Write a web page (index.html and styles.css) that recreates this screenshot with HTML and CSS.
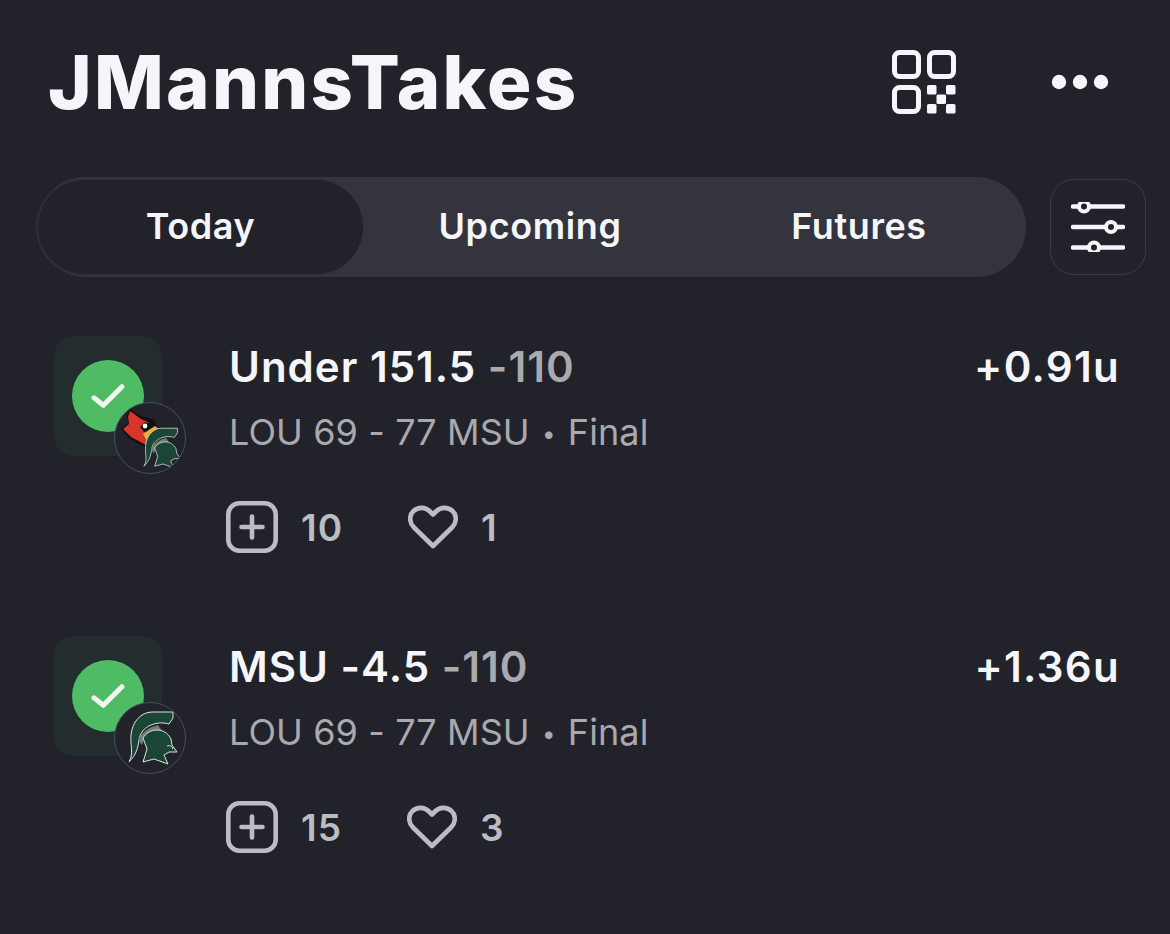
FILE: index.html
```html
<!DOCTYPE html>
<html lang="en">
<head>
<meta charset="utf-8">
<title>JMannsTakes</title>
<link rel="stylesheet" href="styles.css">
</head>
<body>
<main class="screen">
  <header class="header">
    <h1 class="title">JMannsTakes</h1>
    <div class="header-actions">
      <svg class="qr" viewBox="0 0 64 64" fill="none" stroke="#f5f6fa" stroke-width="5">
        <rect x="2.500" y="2.500" width="24" height="24" rx="5"/>
        <rect x="37.500" y="2.500" width="24" height="24" rx="5"/>
        <rect x="2.500" y="37.500" width="24" height="24" rx="5"/>
        <g fill="#f5f6fa" stroke="none">
          <rect x="35" y="35" width="9.500" height="9.500" rx="1.500"/>
          <rect x="54" y="35" width="9.500" height="9.500" rx="1.500"/>
          <rect x="44.500" y="44.500" width="9.500" height="9.500" rx="1.500"/>
          <rect x="35" y="54" width="9.500" height="9.500" rx="1.500"/>
          <rect x="54" y="54" width="9.500" height="9.500" rx="1.500"/>
        </g>
      </svg>
      <svg class="dots" viewBox="0 0 58 16" fill="#f5f6fa">
        <circle cx="8" cy="8" r="7.200"/>
        <circle cx="29" cy="8" r="7.200"/>
        <circle cx="50" cy="8" r="7.200"/>
      </svg>
    </div>
  </header>

  <nav class="tabs-row">
    <div class="tabs">
      <div class="tab tab-active">Today</div>
      <div class="tab tab-upcoming">Upcoming</div>
      <div class="tab tab-futures">Futures</div>
    </div>
    <div class="filter">
      <svg class="filter-icon" viewBox="0 0 54 50" fill="none" stroke="#f5f6fa" stroke-width="4.400" stroke-linecap="round">
        <path d="M2 4.500h50M2 25h50M2 45.500h50"/>
        <g fill="#21222a" stroke-width="4">
          <circle cx="13" cy="4.500" r="5"/>
          <circle cx="40" cy="25" r="5"/>
          <circle cx="23" cy="45.500" r="5"/>
        </g>
      </svg>
    </div>
  </nav>

  <section class="pick">
    <div class="status">
      <div class="status-tile">
        <div class="check">
          <svg class="check-icon" viewBox="0 0 36 28" fill="none" stroke="#f1f6f1" stroke-width="5.400" stroke-linecap="round" stroke-linejoin="round"><path d="M3 16l10 8L33 4"/></svg>
        </div>
      </div>
      <div class="badge">
        <svg class="logo" viewBox="0 0 70 70">
          <path d="M15 5l-3 8 1 7-7 6 9 10 18 10 10-20-3-8-6-3-5-1-7-3z" fill="#111"/>
          <path d="M15 8l-2 6 1 7-6 5 8 8 15 8 5-15-3-8-7-3z" fill="#d9352a"/>
          <path d="M25 24l5-5 7 3-3 6-5 1z" fill="#111"/>
          <circle cx="30" cy="23" r="2.400" fill="#fff"/>
          <path d="M28 31l12-8 5 4-1 7-8 6-4-2z" fill="#e8b23a"/>
          <g transform="translate(18.400 18.400) scale(.76)">
            <path d="M14 59C19 50 15 42 16 32 17 19 26 9 37 9H58V15L54 21C47 19 41 20 36 22 29 25 25 30 24 37 23 45 21 52 14 59Z" fill="#1b4636" stroke="#d9e3de"/>
            <path d="M23 37C27 29 34 24 43 22L47 28C40 28 33 31 29 36L27 42Z" fill="#6f7f78"/>
            <path d="M28 35C31 30 36 27 42 27 48 27 53 30 56 36L57 42 62 49H54L49 52 53 61 39 56 28 59 32 46Z" fill="#1b4636" stroke="#d9e3de"/>
          </g>
        </svg>
      </div>
    </div>
    <div class="pick-body">
      <div class="pick-top">
        <div class="pick-name">Under 151.5 <span class="odds">-110</span></div>
        <div class="units">+0.91u</div>
      </div>
      <div class="score">LOU 69 - 77 MSU <span class="sep">•</span> Final</div>
      <div class="actions">
        <div class="action action-add">
          <svg class="add-icon" viewBox="0 0 52 52" fill="none" stroke="#bcbcc2" stroke-width="4.600" stroke-linecap="round"><rect x="2.300" y="2.300" width="47.400" height="47.400" rx="11"/><path d="M26 15.500v21M15.500 26h21"/></svg>
          <span class="count">10</span>
        </div>
        <div class="action">
          <svg class="heart-icon" viewBox="0 0 50 44" fill="none" stroke="#bcbcc2" stroke-width="4.600" stroke-linejoin="round"><path d="M25 41L6 22.500C1 17.500 1 10 5.500 6c5-4.500 12-4 16.500 .5l3 3 3-3c4.500-4.500 11.500-5 16.500-.5 4.500 4 4.500 11.500 -.5 16.500z"/></svg>
          <span class="count">1</span>
        </div>
      </div>
    </div>
  </section>

  <section class="pick">
    <div class="status">
      <div class="status-tile">
        <div class="check">
          <svg class="check-icon" viewBox="0 0 36 28" fill="none" stroke="#f1f6f1" stroke-width="5.400" stroke-linecap="round" stroke-linejoin="round"><path d="M3 16l10 8L33 4"/></svg>
        </div>
      </div>
      <div class="badge">
        <svg class="logo" viewBox="0 0 70 70">
          <path d="M14 59C19 50 15 42 16 32 17 19 26 9 37 9H58V15L54 21C47 19 41 20 36 22 29 25 25 30 24 37 23 45 21 52 14 59Z" fill="#1b4636" stroke="#d9e3de"/>
          <path d="M23 37C27 29 34 24 43 22L47 28C40 28 33 31 29 36L27 42Z" fill="#6f7f78"/>
          <path d="M28 35C31 30 36 27 42 27 48 27 53 30 56 36L57 42 62 49H54L49 52 53 61 39 56 28 59 32 46Z" fill="#1b4636" stroke="#d9e3de"/>
          <path d="M52 43c3-1 5 0 6 3" fill="none" stroke="#d9e3de"/>
        </svg>
      </div>
    </div>
    <div class="pick-body">
      <div class="pick-top">
        <div class="pick-name">MSU -4.5 <span class="odds">-110</span></div>
        <div class="units">+1.36u</div>
      </div>
      <div class="score">LOU 69 - 77 MSU <span class="sep">•</span> Final</div>
      <div class="actions">
        <div class="action action-add">
          <svg class="add-icon" viewBox="0 0 52 52" fill="none" stroke="#bcbcc2" stroke-width="4.600" stroke-linecap="round"><rect x="2.300" y="2.300" width="47.400" height="47.400" rx="11"/><path d="M26 15.500v21M15.500 26h21"/></svg>
          <span class="count">15</span>
        </div>
        <div class="action">
          <svg class="heart-icon" viewBox="0 0 50 44" fill="none" stroke="#bcbcc2" stroke-width="4.600" stroke-linejoin="round"><path d="M25 41L6 22.500C1 17.500 1 10 5.500 6c5-4.500 12-4 16.500 .5l3 3 3-3c4.500-4.500 11.500-5 16.500-.5 4.500 4 4.500 11.500 -.5 16.500z"/></svg>
          <span class="count">3</span>
        </div>
      </div>
    </div>
  </section>
</main>
</body>
</html>
```
FILE: styles.css
```css
* { box-sizing: border-box; }
html, body { margin: 0; height: 100%; background: #21222a; }
body { font-family: Inter, "Liberation Sans", sans-serif; color: #f5f6fa; overflow: hidden; }
.screen { width: 1170px; height: 934px; padding-top: 40px; }

.header { display: flex; align-items: center; justify-content: space-between; height: 84px; padding: 0 61px 0 48px; }
.title { margin: 0; font-size: 74px; font-weight: 800; line-height: 84px; letter-spacing: 2.300px; color: #f5f6fa; }
.header-actions { display: flex; align-items: center; gap: 95px; }
.qr { width: 64px; height: 64px; display: block; }
.dots { width: 58px; height: 16px; display: block; }

.tabs-row { display: flex; align-items: center; gap: 24px; margin-top: 53px; padding-left: 36px; }
.tabs { display: flex; align-items: center; width: 990px; height: 100px; border-radius: 50px; background: #33343d; padding: 3px 2px; }
.tab { font-size: 36px; font-weight: 600; line-height: 92px; height: 94px; letter-spacing: .6px; text-align: center; color: #f5f6fa; }
.tab-active { width: 325px; border-radius: 47px; background: #21222a; box-shadow: -1px 0 0 1px #2d2e37; }
.tab-upcoming { width: 334px; }
.tab-futures { width: 324px; }
.filter { display: flex; align-items: center; justify-content: center; width: 96px; height: 96px; border: 1px solid #3a3b44; border-radius: 24px; }
.filter-icon { width: 54px; height: 50px; display: block; }

.pick { display: flex; height: 300px; padding-left: 54px; }
.tabs-row + .pick { margin-top: 59px; }
.status { position: relative; width: 175px; flex: none; height: 138px; }
.status-tile { display: flex; align-items: center; justify-content: center; width: 108px; height: 120px; border-radius: 20px; background: #242d2d; }
.check { display: flex; align-items: center; justify-content: center; width: 72px; height: 72px; border-radius: 50%; background: #4fbc65; }
.check-icon { width: 34px; height: 26px; display: block; }
.badge { position: absolute; left: 60px; top: 66px; width: 72px; height: 72px; border-radius: 50%; border: 1px solid #4c4d55; background: #21222a; overflow: hidden; }
.logo { display: block; width: 70px; height: 70px; }

.pick-body { width: 891px; flex: none; }
.pick-top { display: flex; justify-content: space-between; align-items: center; height: 62px; }
.pick-name { font-size: 42px; font-weight: 600; line-height: 60px; letter-spacing: 1px; color: #f5f6fa; }
.units { font-size: 42px; font-weight: 600; line-height: 60px; letter-spacing: 1.300px; color: #f5f6fa; }
.odds { color: #a9a9af; font-weight: 600; }
.score { margin-top: 14px; font-size: 36px; line-height: 40px; letter-spacing: .1px; color: #a9a9af; }
.sep { font-size: 24px; vertical-align: 3px; margin: 0 2px; }
.actions { display: flex; align-items: center; gap: 65px; margin-top: 46px; margin-left: -3px; }
.action { display: flex; align-items: center; gap: 23px; height: 54px; }
.count { font-size: 37px; font-weight: 600; letter-spacing: 1px; color: #bcbcc2; }
.add-icon { width: 52px; height: 52px; display: block; }
.heart-icon { width: 50px; height: 44px; display: block; }
```
